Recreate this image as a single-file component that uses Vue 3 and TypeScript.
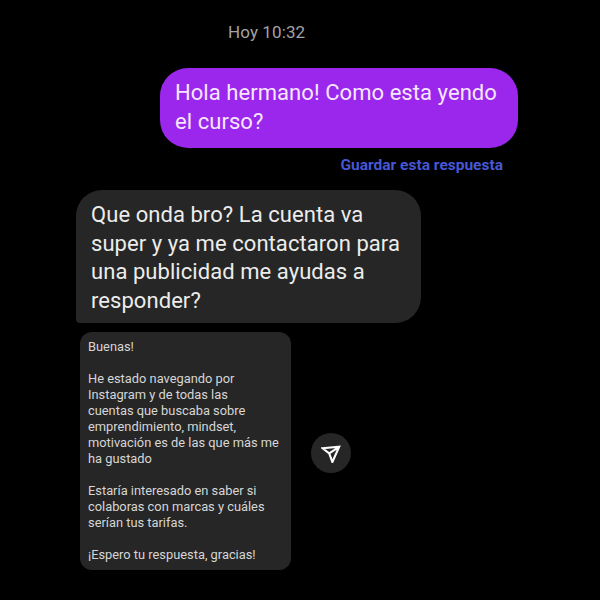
<template>
  <div class="chat">
    <div class="time">Hoy 10:32</div>

    <div class="sent">
      <div class="bubble purple">Hola hermano! Como esta yendo<br />el curso?</div>
      <a class="save">Guardar esta respuesta</a>
    </div>

    <div class="bubble gray">
      Que onda bro? La cuenta va<br />
      super y ya me contactaron para<br />
      una publicidad me ayudas a<br />
      responder?
    </div>

    <div class="suggestion">
      <div class="card">
        <p v-for="(block, i) in blocks" :key="i">
          <span v-for="line in block" :key="line">{{ line }}<br /></span>
        </p>
      </div>
      <button class="send" type="button" aria-label="Enviar">
        <svg width="20" height="20" viewBox="0 0 20 20" fill="none">
          <path
            d="M1.6 5.2 L18.2 3.8 L11.4 19 L8.2 10.4 Z M8.2 10.4 L18.2 3.8"
            stroke="#fff"
            stroke-width="2.1"
            stroke-linejoin="miter"
          />
        </svg>
      </button>
    </div>
  </div>
</template>

<script setup lang="ts">
const blocks: string[][] = [
  ['Buenas!'],
  [
    'He estado navegando por',
    'Instagram y de todas las',
    'cuentas que buscaba sobre',
    'emprendimiento, mindset,',
    'motivación es de las que más me',
    'ha gustado',
  ],
  ['Estaría interesado en saber si', 'colaboras con marcas y cuáles', 'serían tus tarifas.'],
  ['¡Espero tu respuesta, gracias!'],
]
</script>

<style>
html,
body {
  background: #000;
}
</style>

<style scoped>
.chat {
  width: 600px;
  height: 600px;
  box-sizing: border-box;
  background: #000;
  font-family: Roboto, 'Liberation Sans', sans-serif;
  padding-top: 22px;
  overflow: hidden;
}

.time {
  color: #a3a3a3;
  font-size: 17px;
  line-height: 20px;
  padding-left: 228px;
  letter-spacing: 0.1px;
}

.sent {
  margin-top: 26px;
  margin-left: 160px;
  width: 358px;
}

.bubble {
  font-size: 22px;
  line-height: 28.5px;
  letter-spacing: 0.06px;
  box-sizing: border-box;
}

.purple {
  height: 80px;
  padding: 11px 15px;
  background: #9b27ec;
  color: #f6e6ff;
  border-radius: 28px;
}

.save {
  display: block;
  margin-top: 8px;
  text-align: right;
  padding-right: 15px;
  color: #4757d4;
  font-size: 15.5px;
  font-weight: 700;
  line-height: 18px;
}

.gray {
  margin-top: 16px;
  margin-left: 76px;
  width: 345px;
  height: 133px;
  padding: 11px 15px;
  background: #262626;
  color: #ececec;
  border-radius: 26px 26px 26px 4px;
}

.suggestion {
  display: flex;
  align-items: center;
  gap: 20px;
  margin-top: 9px;
  margin-left: 80px;
}

.card {
  width: 211px;
  height: 238px;
  box-sizing: border-box;
  padding: 6.5px 8px;
  background: #262626;
  color: #d6d6d6;
  border-radius: 12px;
  font-size: 12.85px;
  line-height: 16.05px;
  white-space: nowrap;
}

.card p {
  margin: 0 0 16.05px;
}

.send {
  width: 40px;
  height: 40px;
  margin-top: 4px;
  padding: 0;
  border: none;
  border-radius: 50%;
  background: #262626;
  display: flex;
  align-items: center;
  justify-content: center;
}
</style>
